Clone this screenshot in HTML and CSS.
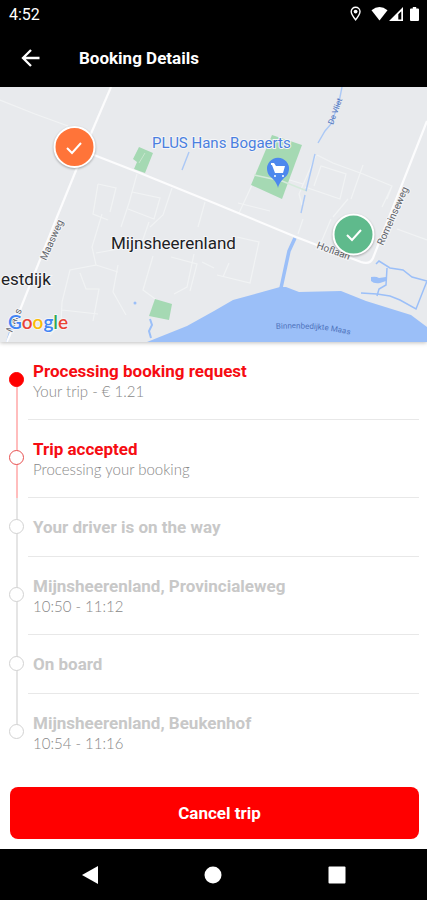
FILE: index.html
```html
<!DOCTYPE html>
<html lang="en">
<head>
<meta charset="utf-8">
<meta name="viewport" content="width=device-width, initial-scale=1">
<title>Booking Details</title>
<link rel="stylesheet" href="styles.css">
</head>
<body>
<div class="screen">
  <div class="status">
    <span class="clock">4:52</span>
    <svg class="status-icons" width="72" height="16" viewBox="0 0 72 16" aria-hidden="true">
      <path d="M5.600 1.200a4.400 4.400 0 0 0-4.400 4.400c0 3 4.400 8.200 4.400 8.200s4.400-5.200 4.400-8.200a4.400 4.400 0 0 0-4.400-4.400z" fill="none" stroke="#fff" stroke-width="1.400"/>
      <circle cx="5.600" cy="5.600" r="1.900" fill="#fff"/>
      <path d="M21.500 4.200Q29.500-2 37.500 4.200L29.500 14.500z" fill="#fff"/>
      <path fill-rule="evenodd" d="M53 1v14H39zM51.300 5.200l-3 3v5.300h3z" fill="#fff"/>
      <path d="M60 3.500q0-1 1-1h1.800V1h3.400v1.500H68q1 0 1 1V14q0 1-1 1h-7q-1 0-1-1z" fill="#fff"/>
    </svg>
  </div>
  <header class="bar">
    <button class="back" type="button" aria-label="Back">
      <svg width="20" height="18" viewBox="0 0 20 18" aria-hidden="true"><path d="M18.500 9H2M10 1L2 9l8 8" fill="none" stroke="#fff" stroke-width="2.300"/></svg>
    </button>
    <h1>Booking Details</h1>
  </header>
  <svg class="map" viewBox="0 0 427 255" role="img" aria-label="Map of Mijnsheerenland">
    <rect width="427" height="255" fill="#e8eaed"/>
    <g class="minor">
      <path d="M0 13L35 27L68 39"/>
      <path d="M137 87L129 116L121 140M172 101L163 128L150 140M98 97L93 127L108 133M98 97L116 101L110 125M132 105L160 111L154 132L128 122M205 115L198 140"/>
      <path d="M102 127L92 160L96 178L70 183L62 215L61 236L50 248M96 166L141 158L149 135M96 178L118 185M80 186L86 202L99 202L93 234M62 223L98 227M118 178L113 205L126 228M153 169L143 203L158 214M171 170L197 177L190 204M194 167L187 200L174 207M202 175L214 181"/>
      <path d="M237 150L259 155L250 196L217 188M229 176L223 190M303 132L298 147M331 132L320 158M397 142L427 153"/>
      <path d="M317 68L333 76L363 87L392 99L387 112M305 100L340 112L346 87L321 79L314 99M363 78L351 112M316 68L299 107L302 118M303 97L283 91M252 98L239 126M238 116L270 124M348 112L333 130M392 99L382 120"/>
    </g>
    <path class="park" d="M139 60L153 66L145 86L134 82L137 75L133 72z"/>
    <path class="park" d="M272 48L302 58L282 112L251 98z"/>
    <path class="park" d="M155 212L172 217L169 233L149 229z"/>
    <path d="M254 88L282 94L307 104" fill="none" stroke="#d5eadb" stroke-width="1.500"/>
    <path d="M139 76L145 66" stroke="#c8e6ce" stroke-width="1"/>
    <path class="water" d="M147 255L187 239L214 224L233 213L280 200L286 200L299 205L341 204L366 214L411 228L427 240V255z"/>
    <path class="canal" d="M295 151L289 164L281 201" stroke-width="3.500"/>
    <path class="canal" d="M342 0L339 15L331 37L325 44L318 56M315 67L306 104M305 108L301 126M189 65L182 83" stroke-width="1.400" opacity=".8"/>
    <path class="canal" d="M150 232L152 238L149 244L151 251M12 238L7 255" stroke-width="2"/>
    <path class="canal" d="M376 177L379 174L390 181L403 183L412 190L427 194L416 222L400 213L390 209L377 207L361 206M387 181L386 198L379 202L377 209" stroke-width="1.500"/>
    <path class="water" d="M371 190q5-1 8 1l7-1v4l-6 2q-6 1-9-2z"/>
    <circle cx="135" cy="216" r="1.500" class="water"/>
    <g class="road">
      <path d="M111 0L90 49L57 130L18 228L7 255"/>
      <path d="M76 61L135 84L214 116L296 150L361 175Q370 178 373 171L427 34"/>
    </g>
    <g class="street">
      <text transform="translate(46 174) rotate(-66)">Maasweg</text>
      <text transform="translate(383 159) rotate(-66)">Romeinseweg</text>
      <text transform="translate(316 161) rotate(20)">Hoflaan</text>
      <text transform="translate(12 246) rotate(-66)">Maas</text>
    </g>
    <path id="river" d="M276 242Q325 239 366 252" fill="none"/>
    <g class="stream">
      <text transform="translate(333 38) rotate(-70)">De Vliet</text>
      <text><textPath href="#river">Binnenbedijkte Maas</textPath></text>
    </g>
    <text class="shop" x="152" y="61">PLUS Hans Bogaerts</text>
    <path d="M278 101q-1-5-6-10a11 11 0 1 1 12 0q-5 5-6 10z" fill="#4d88ed"/>
    <path d="M271 76h3l2 3h9l-2 7h-8l-3-8h-1z" fill="#fff"/>
    <circle cx="275" cy="89" r="1" fill="#fff"/><circle cx="283" cy="89" r="1" fill="#fff"/>
    <text class="town" x="111" y="162">Mijnsheerenland</text>
    <text class="town" x="1" y="198">estdijk</text>
    <text class="brand" x="8" y="242"><tspan fill="#4285f4">G</tspan><tspan fill="#ea4335">o</tspan><tspan fill="#fbbc05">o</tspan><tspan fill="#4285f4">g</tspan><tspan fill="#34a853">l</tspan><tspan fill="#ea4335">e</tspan></text>
    <g class="pin">
      <circle cx="74.500" cy="60" r="20" fill="#ff7439"/>
      <path d="M67 61l5 5 9-10"/>
    </g>
    <g class="pin">
      <circle cx="353.500" cy="147.500" r="20" fill="#5fba8c"/>
      <path d="M347 148l5 5 9-10"/>
    </g>
  </svg>
  <main>
    <ol class="steps">
      <li class="step done"><div class="info"><h2>Processing booking request</h2><p>Your trip - € 1.21</p></div></li>
      <li class="step now"><div class="info"><h2>Trip accepted</h2><p>Processing your booking</p></div></li>
      <li class="step"><div class="info"><h2>Your driver is on the way</h2></div></li>
      <li class="step"><div class="info"><h2>Mijnsheerenland, Provincialeweg</h2><p>10:50 - 11:12</p></div></li>
      <li class="step"><div class="info"><h2>On board</h2></div></li>
      <li class="step"><div class="info"><h2>Mijnsheerenland, Beukenhof</h2><p>10:54 - 11:16</p></div></li>
    </ol>
    <button class="cancel" type="button">Cancel trip</button>
  </main>
  <nav class="system" aria-label="System">
    <button type="button" aria-label="Back"><svg width="18" height="20" viewBox="0 0 18 20"><path d="M17 1v18L1 10z" fill="#fff"/></svg></button>
    <button type="button" aria-label="Home"><svg width="18" height="18" viewBox="0 0 18 18"><circle cx="9" cy="9" r="8.500" fill="#fff"/></svg></button>
    <button type="button" aria-label="Recent apps"><svg width="18" height="18" viewBox="0 0 18 18"><rect width="17" height="17" x=".5" y=".5" rx="1" fill="#fff"/></svg></button>
  </nav>
</div>
</body>
</html>
```
FILE: styles.css
```css
*, *::before, *::after { box-sizing: border-box; }
body, h1, h2, p, ol { margin: 0; padding: 0; }
body { background: #fff; font-family: Roboto, "Liberation Sans", sans-serif; }
button { border: 0; padding: 0; background: none; font: inherit; color: inherit; cursor: pointer; }
svg { display: block; }

.screen { min-height: 100vh; display: flex; flex-direction: column; }

.status {
  display: flex;
  align-items: center;
  justify-content: space-between;
  height: 28px;
  padding: 0 5px 0 9px;
  background: #000;
  color: #fff;
}
.clock { font-size: 16px; font-weight: 400; }

.bar {
  display: flex;
  align-items: center;
  gap: 38px;
  height: 59px;
  padding: 0 21px;
  background: #000;
  color: #fff;
}
.bar h1 { font-size: 17px; line-height: 20px; font-weight: 700; }

.map { width: 100%; box-shadow: 0 1px 4px rgba(0, 0, 0, .25); }
.minor { fill: none; stroke: #f1f3f4; stroke-width: 1.2; }
.road { fill: none; stroke: #fcfcfd; stroke-width: 2.2; }
.park { fill: #a5d9b3; }
.water { fill: #9bbff8; }
.canal { fill: none; stroke: #9bbff8; }
.map text { paint-order: stroke; stroke: #f4f5f7; stroke-width: 2px; }
.street { font-size: 10px; fill: #5f6368; }
.stream { font-size: 8px; fill: #4f74bd; }
.map .stream text { stroke: none; }
.shop { font-size: 15px; fill: #4a7fe0; }
.town { font-size: 17px; fill: #202124; }
.brand { font-family: Lato, sans-serif; font-size: 19px; font-weight: 600; }
.pin circle { stroke: #fff; stroke-width: 2; filter: drop-shadow(0 1px 1px rgba(0, 0, 0, .3)); }
.pin path { fill: none; stroke: #fff; stroke-width: 2; }

main { flex: 1; display: flex; flex-direction: column; }
.steps { list-style: none; }
.step {
  --line: #e5e5e5;
  --ring: #d2d2d2;
  --dot: #fff;
  position: relative;
  display: flex;
  padding: 0 8px 0 28px;
  color: #c8c8c8;
}
.done, .now { --line: #ffbdbd; --ring: #e85050; color: #f60c12; }
.done { --ring: #f00; --dot: #f00; }
.step::before {
  content: "";
  position: absolute;
  left: 16px;
  top: 0;
  bottom: 0;
  width: 2px;
  background: var(--line);
}
.step:first-child::before { top: 50%; }
.step:last-child::before { bottom: 50%; }
.step::after {
  content: "";
  position: absolute;
  left: 9px;
  top: calc(50% - 9px);
  width: 15px;
  height: 15px;
  border: 1px solid var(--ring);
  border-radius: 50%;
  background: var(--dot);
}
.info { flex: 1; padding: 19px 5px 18px; border-bottom: 1px solid #e8e8e8; }
.step:last-child .info { border-bottom: 0; }
.info h2 { font-size: 17px; line-height: 21px; font-weight: 700; }
.info p { font-family: Lato, sans-serif; font-size: 15px; line-height: 19px; font-weight: 300; color: #888; }

.cancel {
  margin: auto 8px 10px 10px;
  padding-left: 10px;
  height: 52px;
  border-radius: 8px;
  background: #f00;
  color: #fff;
  font-size: 17px;
  font-weight: 700;
}

.system {
  display: flex;
  align-items: center;
  justify-content: space-around;
  height: 51px;
  padding: 0 28px;
  background: #000;
}
```
